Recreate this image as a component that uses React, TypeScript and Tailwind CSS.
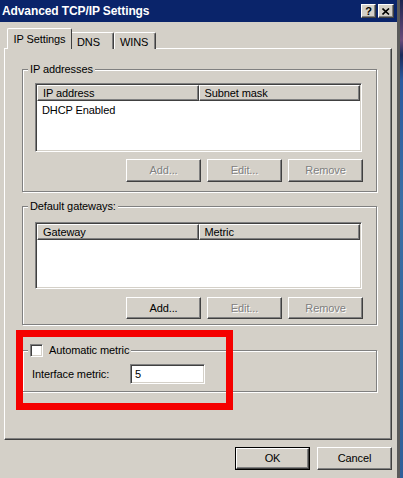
import React from "react";

const raised =
  "border border-t-white border-l-white border-r-[#404040] border-b-[#404040] shadow-[inset_-1px_-1px_0_#808080]";
const sunken =
  "border border-t-[#808080] border-l-[#808080] border-r-white border-b-white shadow-[inset_1px_1px_0_#404040,inset_-1px_-1px_0_#d4d0c8]";

function Btn({ label, disabled, w = "w-[75px]", h = "h-[23px]" }: { label: string; disabled?: boolean; w?: string; h?: string }) {
  return (
    <div className={`${w} ${h} bg-[#d4d0c8] ${raised} flex items-center justify-center text-[11px] ${disabled ? "text-[#808080] [text-shadow:1px_1px_0_#fff]" : "text-black"}`}>
      {label}
    </div>
  );
}

function ListView({ c1, c2, h, rows }: { c1: string; c2: string; h: string; rows?: string[] }) {
  return (
    <div className={`w-[327px] ${h} bg-white ${sunken} p-[1px] flex flex-col`}>
      <div className="h-[16px] flex shrink-0">
        <div className={`w-[162px] h-full bg-[#d4d0c8] ${raised} pl-[5px] flex items-center text-[11px]`}>{c1}</div>
        <div className={`w-[162px] h-full bg-[#d4d0c8] ${raised} pl-[5px] flex items-center text-[11px]`}>{c2}</div>
      </div>
      <div className="flex flex-col pl-[5px] pt-[3px] text-[11px] leading-[13px]">
        {rows?.map((r) => (
          <div key={r}>{r}</div>
        ))}
      </div>
    </div>
  );
}

function GroupFrame({ h, mt, children, legend }: { h: string; mt: string; children: React.ReactNode; legend: React.ReactNode }) {
  return (
    <div className={`relative w-[355px] ${h} ${mt} border border-[#808080] shadow-[inset_1px_1px_0_#fff,1px_1px_0_#fff]`}>
      <div className="absolute top-[-8px] left-[5px] px-[2px] bg-[#d4d0c8] text-[11px] leading-[14px] flex items-center">
        {legend}
      </div>
      {children}
    </div>
  );
}

export default function App() {
  return (
    <div className="w-[403px] h-[478px] flex overflow-hidden font-['Liberation_Sans',Arial,sans-serif] tracking-[-0.1px] text-black bg-[#d4d0c8]">
      <div className="w-[400px] h-full flex flex-col bg-[#d4d0c8] border-r-[3px] border-r-[#5a5a5a]">
        {/* title bar */}
        <div className="h-[22px] shrink-0 bg-[#0a246a] flex items-center justify-between pl-[2px] pr-[3px]">
          <span className="text-white font-bold text-[12px] tracking-[-0.1px] leading-none">Advanced TCP/IP Settings</span>
          <div className="flex gap-[2px] items-center">
            <div className={`w-[15px] h-[14px] bg-[#d4d0c8] ${raised} flex items-center justify-center text-[11px] font-bold leading-none`}>?</div>
            <div className={`w-[16px] h-[14px] bg-[#d4d0c8] ${raised} flex items-center justify-center`}>
              <svg width="8" height="7" viewBox="0 0 8 7">
                <path d="M0.5 0.5 L7 6.5 M7 0.5 L0.5 6.5" stroke="#000" strokeWidth="1.6" />
              </svg>
            </div>
          </div>
        </div>

        {/* body */}
        <div className="flex flex-col pl-[4px] pt-[6px]">
          {/* tabs */}
          <div className="h-[20px] flex items-start pl-[3px] relative z-10">
            <div className="h-[21px] w-[65px] bg-[#d4d0c8] border-t border-l border-t-white border-l-white border-r border-r-[#404040] rounded-t-[2px] flex items-center justify-center text-[11px] pt-[1px]">
              IP Settings
            </div>
            <div className="h-[17px] mt-[4px] w-[42px] bg-[#d4d0c8] border-t border-t-white border-r border-r-[#404040] shadow-[inset_-1px_0_0_#808080] rounded-tr-[2px] flex items-center pl-[5px] text-[11px] pt-[2px]">
              DNS
            </div>
            <div className="h-[17px] mt-[4px] w-[42px] bg-[#d4d0c8] border-t border-l border-t-white border-l-white border-r border-r-[#404040] shadow-[inset_-1px_0_0_#808080] rounded-t-[2px] flex items-center pl-[5px] text-[11px] pt-[2px]">
              WINS
            </div>
          </div>

          {/* panel */}
          <div className="relative w-[388px] h-[392px] border border-t-white border-l-white border-r-[#404040] border-b-[#404040] shadow-[inset_-1px_-1px_0_#808080] pl-[17px] pt-[20px] flex flex-col">
            <GroupFrame h="h-[123px]" mt="mt-0" legend={<span>IP addresses</span>}>
              <div className="pl-[12px] pt-[13px] flex flex-col">
                <ListView c1="IP address" c2="Subnet mask" h="h-[69px]" rows={["DHCP Enabled"]} />
                <div className="w-[328px] mt-[7px] flex justify-end gap-[6px]">
                  <Btn label="Add..." disabled />
                  <Btn label="Edit..." disabled />
                  <Btn label="Remove" disabled />
                </div>
              </div>
            </GroupFrame>

            <GroupFrame h="h-[119px]" mt="mt-[14px]" legend={<span>Default gateways:</span>}>
              <div className="pl-[12px] pt-[15px] flex flex-col">
                <ListView c1="Gateway" c2="Metric" h="h-[67px]" />
                <div className="w-[328px] mt-[8px] flex justify-end gap-[6px]">
                  <Btn label="Add..." h="h-[22px]" />
                  <Btn label="Edit..." h="h-[22px]" disabled />
                  <Btn label="Remove" h="h-[22px]" disabled />
                </div>
              </div>
            </GroupFrame>

            <GroupFrame
              h="h-[42px]"
              mt="mt-[25px]"
              legend={
                <div className="flex items-center gap-[6px]">
                  <div className={`w-[13px] h-[13px] bg-white ${sunken}`} />
                  <span>Automatic metric</span>
                </div>
              }
            >
              <div className="pl-[9px] pt-[13px] flex items-center">
                <span className="w-[98px] text-[11px]">Interface metric:</span>
                <div className={`w-[75px] h-[20px] bg-white ${sunken} pl-[4px] flex items-center text-[11px]`}>5</div>
              </div>
            </GroupFrame>

            {/* red annotation */}
            <div className="absolute left-[11px] top-[281px] w-[217px] h-[80px] border-[7px] border-[#f50000]" />
          </div>

          {/* footer */}
          <div className="w-[388px] mt-[7px] flex justify-end gap-[7px]">
            <div className="w-[75px] h-[23px] border border-black">
              <div className={`w-full h-full bg-[#d4d0c8] ${raised} flex items-center justify-center text-[11px]`}>OK</div>
            </div>
            <Btn label="Cancel" />
          </div>
        </div>
      </div>
      <div className="w-[3px] h-full shrink-0 bg-[linear-gradient(to_bottom,#1a2450_0px,#6a4a7a_40px,#1a2a5a_55px,#2a5aa0_80px,#3a6ea5_200px,#2f5f9a_478px)]" />
    </div>
  );
}
